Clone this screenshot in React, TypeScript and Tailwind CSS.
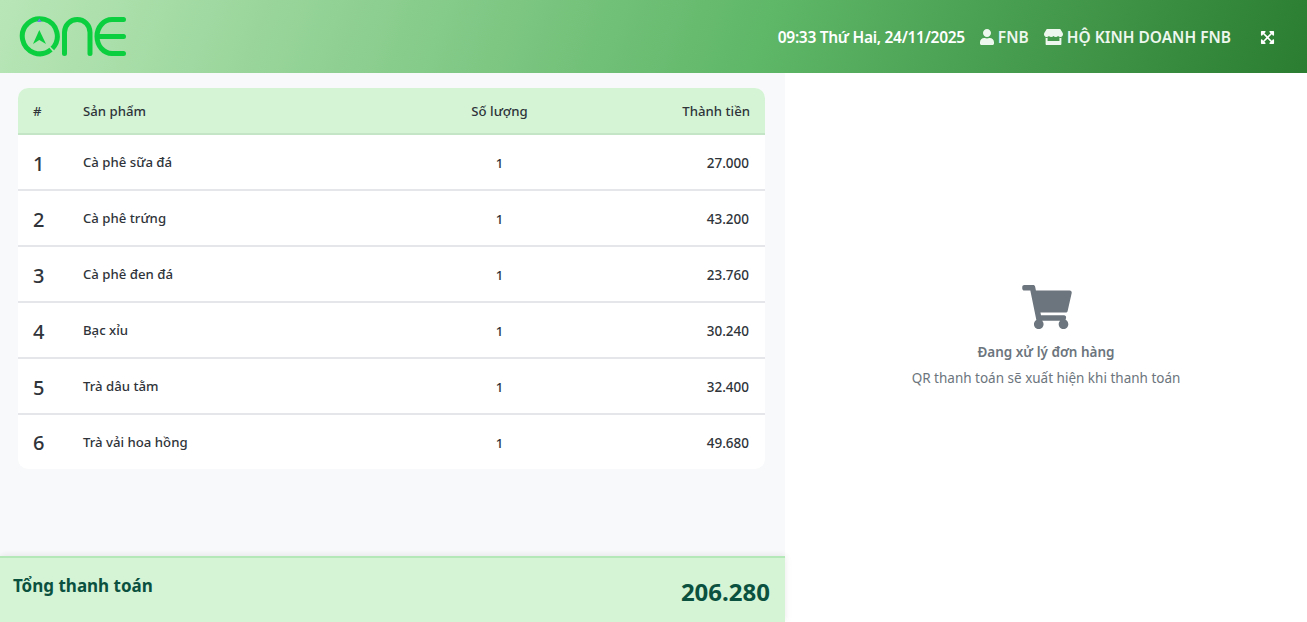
import { FaExpandArrowsAlt, FaShoppingCart, FaStore, FaUser } from 'react-icons/fa'

const ITEMS = [
  { name: 'Cà phê sữa đá', qty: 1, total: '27.000' },
  { name: 'Cà phê trứng', qty: 1, total: '43.200' },
  { name: 'Cà phê đen đá', qty: 1, total: '23.760' },
  { name: 'Bạc xỉu', qty: 1, total: '30.240' },
  { name: 'Trà dâu tằm', qty: 1, total: '32.400' },
  { name: 'Trà vải hoa hồng', qty: 1, total: '49.680' },
]

function Logo() {
  return (
    <svg width="112" height="44" viewBox="0 0 112 44" fill="none" className="mt-[3px] block">
      <path d="M34 33.700A17.500 17.500 0 1 1 35.300 32.500" stroke="#0ccf3f" strokeWidth="5" />
      <path d="M22.300 14L29 28l-6.700-4-6.300 4z" fill="#0ccf3f" />
      <path d="M22.300 2.500L24.600 6H20z" fill="#6f7fe8" />
      <path d="M47.500 37.500V16.250a12.750 12.750 0 0 1 25.500 0V37.500" stroke="#0ccf3f" strokeWidth="5" strokeLinecap="round" />
      <path d="M106.500 3.500H95A15 17 0 0 0 80 20.500A15 17 0 0 0 95 37.500H106.500M81 20.500H106.500" stroke="#0ccf3f" strokeWidth="5" strokeLinecap="round" />
    </svg>
  )
}

export default function App() {
  return (
    <div className="h-[622px] w-[1307px] overflow-hidden bg-white font-['Noto_Sans','Open_Sans',sans-serif] text-[#2f343a]">
      <header className="flex h-[73px] items-center justify-between bg-[linear-gradient(110deg,#b9e6b7_0%,#5fb768_58%,#2a7d31_100%)] pl-[17px] pr-[32px]">
        <Logo />
        <div className="flex items-center pt-[3px] text-[15.500px] font-semibold text-white">
          <span className="tracking-[-0.3px]">09:33 Thứ Hai, 24/11/2025</span>
          <span className="ml-[15px] flex items-center gap-[4px] text-[#eef7ee]">
            <FaUser className="-mt-[2px] h-[16px] w-[14px]" />
            FNB
          </span>
          <span className="ml-[15px] flex items-center gap-[4px] text-[#eef7ee]">
            <FaStore className="-mt-[2px] h-[16px] w-[19px]" />
            HỘ KINH DOANH FNB
          </span>
          <FaExpandArrowsAlt className="-mt-[2px] ml-[29px] h-[15px] w-[15px] text-white" />
        </div>
      </header>

      <div className="flex h-[549px]">
        <main className="flex w-[785px] flex-col justify-between bg-[#f8f9fb]">
          <div className="px-[18px] pt-[15px]">
            <table className="w-[747px] table-fixed border-separate border-spacing-0 overflow-hidden rounded-[10px] bg-white text-[13.200px] font-[550]">
              <thead>
                <tr className="h-[47px] bg-[#d5f4d6]">
                  <th className="w-[65px] border-b-2 border-[#c4e6c6] pt-[2px] pl-[15px] text-left font-[550]">#</th>
                  <th className="w-[334px] border-b-2 border-[#c4e6c6] pt-[2px] text-left font-[550]">Sản phẩm</th>
                  <th className="w-[165px] border-b-2 border-[#c4e6c6] pt-[2px] text-center font-[550]">Số lượng</th>
                  <th className="border-b-2 border-[#c4e6c6] pt-[2px] pr-[15px] text-right font-[550]">Thành tiền</th>
                </tr>
              </thead>
              <tbody>
                {ITEMS.map((item, i) => {
                  const last = i === ITEMS.length - 1
                  const line = last ? '' : 'border-b-2 border-[#e4e6ea]'
                  return (
                    <tr key={item.name} className={last ? 'h-[54px]' : 'h-[56px]'}>
                      <td className={`pl-[15px] text-[20px] font-medium ${last ? 'pt-[1px]' : 'pt-[3px]'} ${line}`}>{i + 1}</td>
                      <td className={`pt-[1px] ${line}`}>{item.name}</td>
                      <td className={`pt-[3px] text-center ${line}`}>{item.qty}</td>
                      <td className={`pt-[3px] pr-[16px] text-right text-[13.500px] ${line}`}>{item.total}</td>
                    </tr>
                  )
                })}
              </tbody>
            </table>
          </div>

          {/* Total bar */}
          <div className="flex h-[66px] justify-between border-t-2 border-[#b5e8b8] bg-[#d5f4d6] pl-[13px] pr-[15px] text-[#0b5140] shadow-[0_-2px_6px_rgba(0,0,0,0.05),2px_0_8px_rgba(0,0,0,0.03)]">
            <span className="mt-[16px] text-[17px] leading-[24px] font-bold">Tổng thanh toán</span>
            <span className="mt-[18px] text-[24px] leading-[32px] font-bold">206.280</span>
          </div>
        </main>

        <aside className="flex flex-1 flex-col items-center pt-[212px] text-[#6c757d]">
          <FaShoppingCart className="ml-[1px] h-[44px] w-[50px]" />
          <p className="mt-[13px] text-[13.500px] leading-[20px] font-semibold">Đang xử lý đơn hàng</p>
          <p className="mt-[6px] text-[13.500px] leading-[20px]">QR thanh toán sẽ xuất hiện khi thanh toán</p>
        </aside>
      </div>
    </div>
  )
}
